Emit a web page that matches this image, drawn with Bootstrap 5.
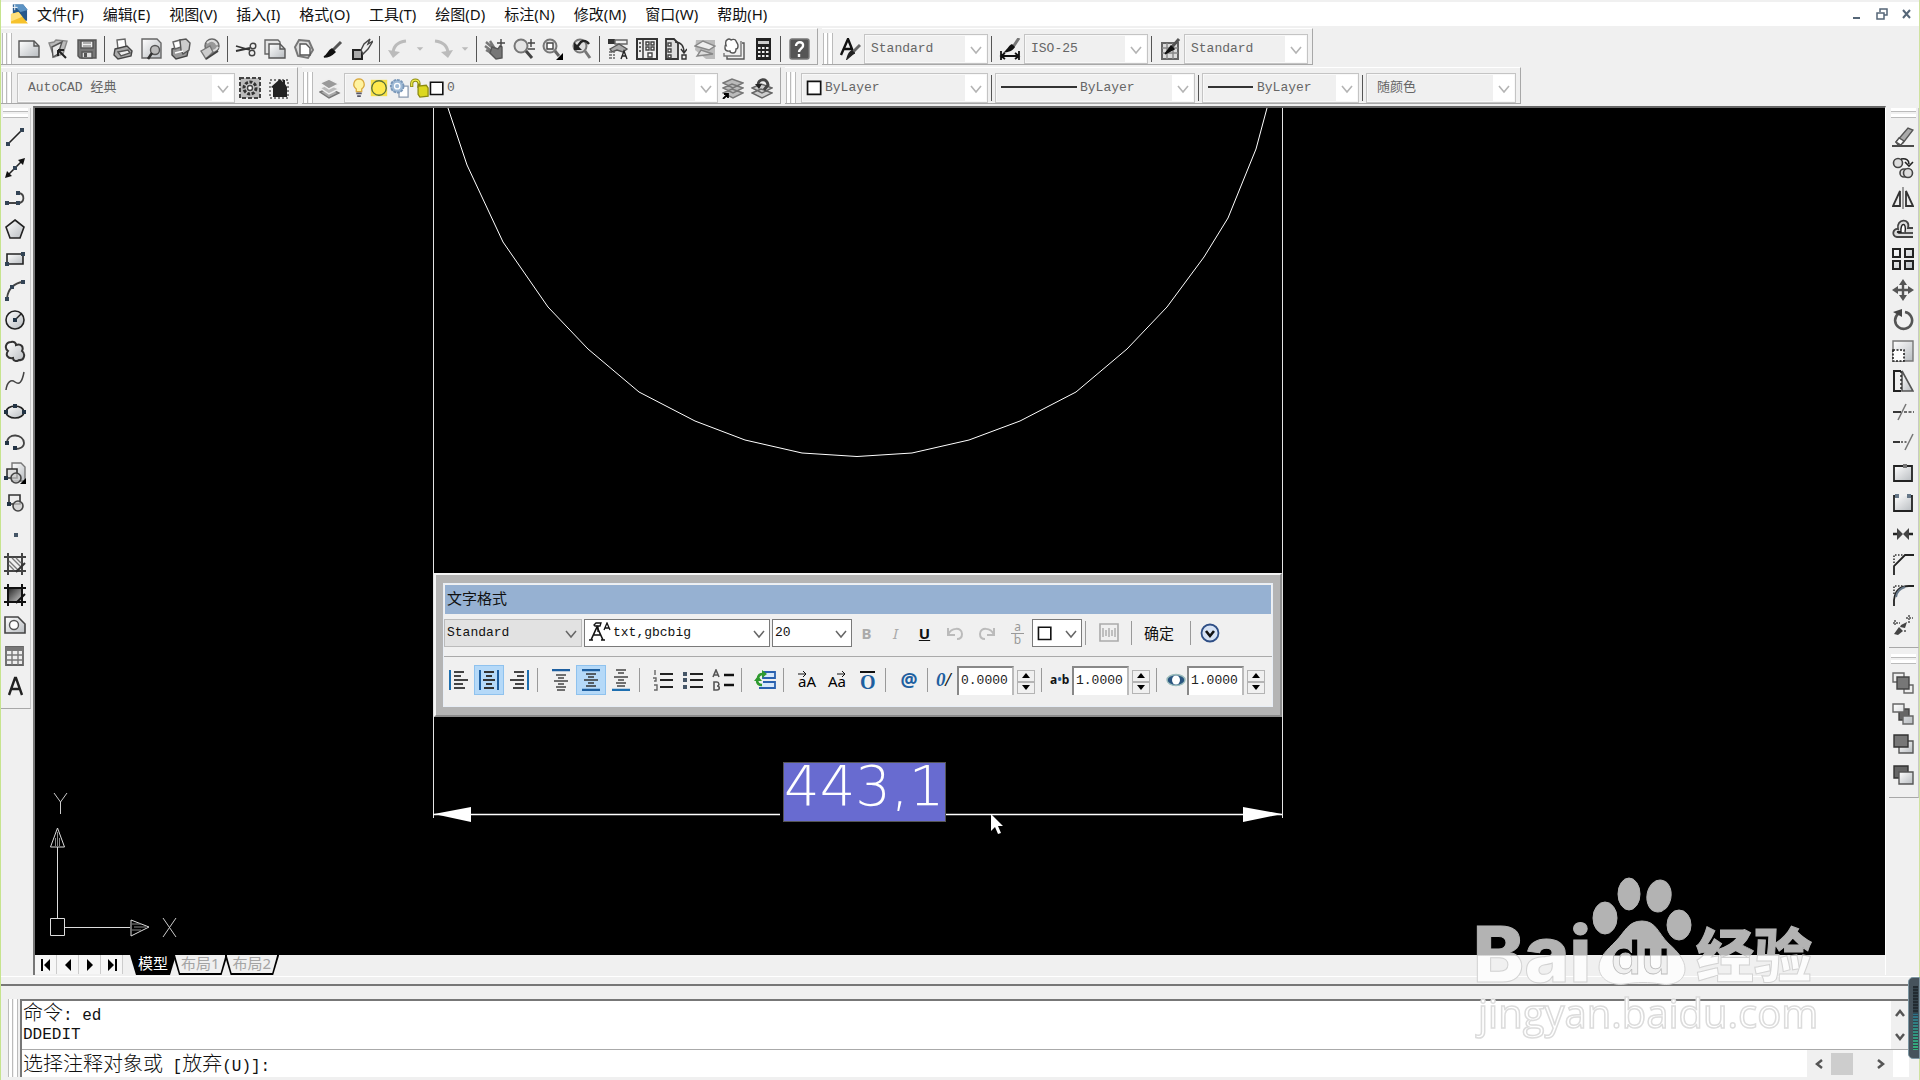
<!DOCTYPE html>
<html lang="zh-CN">
<head>
<meta charset="utf-8">
<meta name="viewport" content="width=device-width, initial-scale=1">
<title>AutoCAD 经典</title>
<link href="https://cdn.jsdelivr.net/npm/bootstrap@5.3.0/dist/css/bootstrap.min.css" rel="stylesheet">
<style>
:root{--face:#f0f0f0;--edge:#a8a8a8;--ui:"Noto Sans","Noto Sans CJK SC",sans-serif;--mono:"Liberation Mono","Noto Sans CJK SC",monospace}
body{background:var(--face);font-family:var(--ui);font-size:15px;line-height:20px;color:#111;border-left:1px solid #c6e48e;border-right:1px solid #cfe3a0}
button,input,select{font-family:inherit;color:inherit;border-radius:0}
svg{display:block;flex:none}
use{fill:none;stroke:#555;stroke-width:1.4px}
.ico{width:22px;height:22px}
/* menu */
.menubar{background:#fff;margin-top:2px;height:24px;padding:0 0 0 9px}
.menubar .nav-link{padding:0 10px 0 9px;color:#111;line-height:24px;white-space:nowrap}
.winbtn{border:0;background:none;padding:0;width:25px;height:24px;display:grid;place-items:center}
/* docked bars */
.barrow{height:37px;margin-top:2px}
.toolbar{border-right:1px solid var(--edge);border-bottom:1px solid var(--edge);border-top:1px solid #fff;padding:4px 4px 0 0;margin-right:4px}
.grip{width:10px;height:31px;margin:0 2px 0 1px;border:solid #bbb;border-width:0 1px;background:linear-gradient(90deg,#fff 0 3px,#bbb 3px 4px,var(--face) 4px 5px,#fff 5px 8px);flex:none}
.grip+.combo{margin-left:3px}
.tb{border:0;background:none;padding:0;width:29px;height:30px;display:grid;place-items:center;flex:none}
.tb.drop{width:16px}
.vsep{width:1px;height:26px;background:#555;margin:0 3px;flex:none}
.combo{border:1px solid #c4c4c4;height:30px;background:var(--face);padding-left:4px;font-size:13px;font-family:var(--mono);color:#666;outline:1px solid #f8f8f8;outline-offset:-2px}
.combo select,.sel{appearance:none;border:0;outline:0;width:100%;min-width:0;height:100%;padding:0 24px 0 2px;color:inherit;font-size:13px;font-family:var(--mono);background:url("data:image/svg+xml,%3Csvg xmlns='http://www.w3.org/2000/svg' width='22' height='26'%3E%3Crect width='22' height='26' fill='white'/%3E%3Cpath d='M6 11l5 6 5-6' fill='none' stroke='%23b4b4b4' stroke-width='1.6'/%3E%3C/svg%3E") right center no-repeat}
.w-style{width:124px}.w-work{width:218px}.w-layer{width:374px}.w-color{width:187px}.w-ltype{width:200px}.w-lweight{width:157px}.w-plot{width:150px}
.combo.tall select{padding-left:6px}
/* side docks */
.dock{width:30px}
.side{border-bottom:1px solid var(--edge);border-right:1px solid #c8c8c8;padding-bottom:7px;width:30px}
.hgrip{height:10px;width:25px;margin:2px 0 4px 2px;border:solid #bbb;border-width:0 0 1px;background:linear-gradient(#fff 0 3px,#bbb 3px 4px,var(--face) 4px 6px,#fff 6px 9px)}
.side .tb{width:27px}
.side .tb:nth-child(odd){height:31px}
.middle{margin-top:2px}
.frame{border-left:2px solid #777;border-top:2px solid #666;border-right:1px solid #fff;margin:0 3px 0 2px}
.stage{background:#000;overflow:hidden}
.plan{width:100%;height:100%;position:absolute;inset:0}
.pointer{position:absolute;left:955px;top:705px}
/* text editor window */
.fmt{position:absolute;left:399px;top:465px;width:848px;background:#b4b4b4;border:solid;border-width:2px;border-color:#f4f4f4 #8c8c8c #8c8c8c #f4f4f4;padding:8px 7px}
.fmtin{background:var(--face);border:1px solid #e8eef6;height:124px}
.fmttitle{background:#96b1d2;height:29px;line-height:27px;font-size:15px;padding-left:2px;margin:1px}
.fmt .sel{border:1px solid #7a7a7a;color:#111;height:28px;background-color:#fff;background-image:url("data:image/svg+xml,%3Csvg xmlns='http://www.w3.org/2000/svg' width='20' height='24'%3E%3Cpath d='M5 10l5 6 5-6' fill='none' stroke='%23666' stroke-width='1.5'/%3E%3C/svg%3E")}
.fmt .sel.gray{background-color:#e2e2e2;border-color:#bbb}
.fmt .pick{display:flex;align-items:center;padding:0;background-image:none}
.fmt .pick .sel{border:0;height:100%}
.w-name{width:138px!important}.w-font{width:186px!important;margin:0 2px}.w-size{width:80px!important}.w-swatch{width:50px!important}
.fmt .vsep{height:24px;background:#999;margin:0 4px 0 3px}
.fmt .tb{font-size:15px}
.fmt .wide{width:32px}
.para .tb{width:30px}
.fmt .para .vsep{margin:0 8px 0 3px}
.fmt .tb.on{background:#b5d9f8;border:1px solid #8fc2ee}
.frac{font-size:12px;line-height:11px;color:#999}
.frac i{display:block;font-style:normal;border-bottom:1px solid #999;padding:0 3px 1px}
.off{color:#aaa}
.blue,.fmt .at{color:#1e5fa0}
.fmt .at{font-size:19px;font-weight:700}
.lab{width:22px;font-weight:700;font-size:12px}
.lab.zero{font:italic 700 19px/20px "Liberation Serif",serif;width:21px}
.num{width:57px;height:29px;border:2px solid #888;border-right-color:#bbb;border-bottom:0;padding:0 0 2px 2px;font:13px var(--mono);background:#fff;color:#222}
.spin{width:18px;margin:3px 3px 0}
.spin button{border:1px solid #b4b4b4;background:var(--face);height:12px;width:18px;padding:0;display:grid;place-items:center}
.mtext{position:absolute;left:749px;top:655px;width:161px;height:58px;border:0;padding:0 0 14px;background:#686bd0;color:#fff;font:200 56px/44px "DejaVu Sans Light",Lato,sans-serif;outline:1px solid #555}
/* layout tabs */
.tabs{height:20px}
.pg{border:0;border-right:1px solid #ccc;background:#f6f6f6;width:22px;height:19px;padding:0;display:grid;place-items:center}
.ltab{position:relative;z-index:0;height:20px;line-height:17px;padding:0 8px;margin-left:-3px;font-size:15px;color:#a4a4a4;text-decoration:none;background:#000;clip-path:polygon(0 0,100% 0,calc(100% - 6px) 100%,6px 100%)}
.ltab::before{content:"";position:absolute;inset:0 2px 2px;z-index:-1;background:var(--face);clip-path:polygon(0 0,100% 0,calc(100% - 5px) 100%,5px 100%)}
.ltab.active{color:#fff;margin-left:7px}
.ltab.active::before{background:#000}
/* command window */
.splitter{border-top:1px solid #fff;border-bottom:2px solid #777;height:10px;margin-top:1px}
.cmd{padding:13px 0 3px;height:94px}
.cmd .grip{height:100%;margin:0 2px 0 7px}
.cmdbox{border-top:2px solid #777;border-left:2px solid #777;background:#fff;margin-right:10px;font-family:var(--mono);font-size:16px}
.cjk{font-size:20px;font-family:"Noto Sans CJK SC",sans-serif;font-weight:300}
.logline{height:23px;line-height:22px;padding-left:1px}
.promptrow{border-top:1px solid #aaa;height:28px;line-height:26px;padding-left:1px}
.promptrow input{border:0;outline:0;background:none}
.sb{background:#f0f0f0}
.sb button{border:0;background:none;padding:0;display:grid;place-items:center}
.thumb{width:22px;height:22px;background:#cdcdcd}
.mark-logo{position:fixed;right:96px;bottom:32px;pointer-events:none}
.meter{position:fixed;right:0;bottom:21px;width:12px;height:82px;border-radius:5px 0 0 5px;background:#46535c;border:1px solid #7d96a2}
.meter::before{content:"";position:absolute;inset:8px 1px 8px 4px;background:repeating-linear-gradient(transparent 0 2px,#33424a 2px 3px),linear-gradient(#222b31 0 42%,#2f6f86 44%,#35b27c)}
</style>
<script src="https://cdn.jsdelivr.net/npm/bootstrap@5.3.0/dist/js/bootstrap.bundle.min.js"></script>
</head>
<body class="d-flex flex-column vh-100 overflow-hidden">
<svg width="0" height="0" class="position-absolute" aria-hidden="true">
<defs>
<linearGradient id="g" x1="0" y1="0" x2="1" y2="1"><stop offset="0" stop-color="#fff"/><stop offset="1" stop-color="#b8bcc0"/></linearGradient>
<linearGradient id="gd" x1="0" y1="0" x2="1" y2="1"><stop offset="0" stop-color="#222"/><stop offset="1" stop-color="#ccc"/></linearGradient>
</defs>
<symbol id="new" viewBox="0 0 22 22"><path d="M1 3h15l5 5v11H1z" fill="url(#g)"/><path d="M16 3v5h5"/></symbol>
<symbol id="open" viewBox="0 0 22 22"><path d="M2 5l5-1 2-2 11 1-4 13-9 3z" fill="#bbb" stroke="#888"/><path d="M5 9l10-5-4 12-5 3z" fill="#e8e8e8"/><path d="M11 12l8 8M11 12v6M11 12h6" stroke="#222" stroke-width="2"/></symbol>
<symbol id="save" viewBox="0 0 22 22"><path d="M2 2h18v18H4l-2-2z" fill="#777"/><path d="M5 3h12v7H5z" fill="#eee"/><path d="M7 5h8M7 8h8" stroke="#999"/><path d="M6 14h10v6H6z" fill="#ddd"/><path d="M8 15h3v4H8z" fill="#555" stroke="none"/></symbol>
<symbol id="print" viewBox="0 0 22 22"><path d="M5 2l8-1 1 8-8 2z" fill="#fff" stroke="#666"/><path d="M3 11l12-3 5 5-1 5-13 3-4-4z" fill="#aaa" stroke="#444"/><path d="M6 14l10-2 2 3-9 3z" fill="#eee"/></symbol>
<symbol id="preview" viewBox="0 0 22 22"><path d="M1 1h15l4 4v15H1z" fill="url(#g)" stroke="#666"/><circle cx="14" cy="12" r="4.500" fill="#bbb"/><path d="M11 15l-4 6" stroke="#333" stroke-width="2.600"/></symbol>
<symbol id="publish" viewBox="0 0 22 22"><path d="M2 11l10-3 6 5-1 5-11 3-4-4z" fill="#999" stroke="#444"/><path d="M3 4l7-2 1 7-6 2z" fill="#fff" stroke="#666"/><path d="M10 2l6-1 4 4-1 7-6 4-2-4z" fill="#ccc"/><path d="M5 15l8-2" stroke="#fff"/></symbol>
<symbol id="plot3d" viewBox="0 0 22 22"><circle cx="13" cy="8" r="7" fill="#999" stroke="#666"/><path d="M8 5c4-4 9-2 10 2M9 11c3 3 8 2 10-2" stroke="#ddd" stroke-width="2"/><path d="M2 13l9-5 3 6-7 7z" fill="#ccc" stroke="#777"/><path d="M7 21l12-8" stroke="#444" stroke-width="2"/></symbol>
<symbol id="cut" viewBox="0 0 22 22"><path d="M1 8l14 4M1 13l14-3" stroke="#333" stroke-width="1.800"/><circle cx="18" cy="8" r="2.800" stroke="#444"/><circle cx="17" cy="15" r="2.800" stroke="#444"/></symbol>
<symbol id="copyc" viewBox="0 0 22 22"><path d="M1 2h13l2 2v12H1z" fill="#e4e4e4" stroke="#666"/><path d="M5 6h11l5 5v9H5z" fill="url(#g)"/><path d="M16 6v5h5"/></symbol>
<symbol id="paste" viewBox="0 0 22 22"><path d="M6 2l10 1 4 9-5 8-10-2-3-9z" fill="#ddd" stroke="#777" stroke-width="2"/><path d="M7 6h6l4 4v7H7z" fill="#fff"/></symbol>
<symbol id="brush" viewBox="0 0 22 22"><path d="M19 4l-9 9" stroke-width="3"/><path d="M10 11l3 3c-3 3-6 5-11 5 4-2 4-6 8-8z" fill="#111" stroke="#111"/></symbol>
<symbol id="match" viewBox="0 0 22 22"><path d="M2 12h9v9H2z" fill="#aaa" stroke="#222" stroke-width="2"/><path d="M10 12l3-6 6-5-2 5 5-3-5 8-5 5z" fill="#eee" stroke="#444"/></symbol>
<symbol id="undo" viewBox="0 0 22 22"><path d="M6 16C6 8 11 4 19 3" stroke="#bbb" stroke-width="3"/><path d="M1 12l5 8 7-6z" fill="#bbb" stroke="none"/></symbol>
<symbol id="redo" viewBox="0 0 22 22"><path d="M16 16C16 8 11 4 3 3" stroke="#bbb" stroke-width="3"/><path d="M21 12l-5 8-7-6z" fill="#bbb" stroke="none"/></symbol>
<symbol id="dd" viewBox="0 0 22 22"><path d="M5 8h12l-6 6z" fill="#bbb" stroke="none"/></symbol>
<symbol id="pan" viewBox="0 0 22 22"><path d="M2 4l8 7M1 8l8 6M2 12l7 4M6 3l5 8" stroke="#777" stroke-width="2.400"/><path d="M8 9l6 2 2-3 2 1v11l-6 1-6-6z" fill="#777"/><path d="M17 1v8M13 5h8" stroke="#444"/></symbol>
<symbol id="zoomrt" viewBox="0 0 22 22"><circle cx="8" cy="8" r="6.500" fill="#e4e4e4" stroke="#777" stroke-width="2"/><path d="M13 13l6 7" stroke="#444" stroke-width="3"/><path d="M15 5h7M18 1v8M15 11h7" stroke="#444"/></symbol>
<symbol id="zoomw" viewBox="0 0 22 22"><circle cx="8" cy="8" r="6.500" fill="#e4e4e4" stroke="#777" stroke-width="2"/><path d="M5 5h6v6H5z" fill="#fff" stroke="#444"/><path d="M13 13l4 5" stroke="#666" stroke-width="3"/><path d="M21 15v7h-7z" fill="#000" stroke="none"/></symbol>
<symbol id="zoomp" viewBox="0 0 22 22"><circle cx="9" cy="8" r="6.500" fill="#ddd" stroke="#777" stroke-width="2"/><path d="M14 13l5 7" stroke="#777" stroke-width="3"/><path d="M6 9l4-5c3-2 6-1 8 2" stroke="#222" stroke-width="2.400"/><path d="M3 4v8h8z" fill="#222" stroke="none"/></symbol>
<symbol id="props" viewBox="0 0 22 22"><path d="M1 1h7v5H1z" fill="#333" stroke="none"/><path d="M8 2h12v4H8z" stroke="#666"/><path d="M3 11l9-5 8 5-4 3-6-2-5 2z" fill="#aaa"/><path d="M2 14h6M2 17h6M2 20h6" stroke="#666" stroke-dasharray="3 1"/><path d="M14 21l3-8 3 8M15 18h4" stroke="#222"/></symbol>
<symbol id="dc" viewBox="0 0 22 22"><path d="M1 1h20v20H1z" fill="#eee" stroke="#333" stroke-width="2"/><path d="M7 1v20" stroke="#333"/><path d="M3 5h2M3 9h2M3 13h2" stroke="#333"/><path d="M10 4h3v3h-3zM15 4h3v3h-3zM10 9h3v3h-3zM15 9h3v3h-3zM12 15h4v4h-4z" stroke="#444" fill="#fff"/></symbol>
<symbol id="tp" viewBox="0 0 22 22"><path d="M1 1h8l4 4v16H1z" fill="#ddd" stroke="#333" stroke-width="1.800"/><path d="M3 5h3v3H3zM3 11h3v3H3zM3 17h3v3H3z" fill="#fff" stroke="#444"/><path d="M10 4c6 0 9 4 9 11M16 11l3 4 3-4M17 17h4v4h-4z" stroke="#333"/></symbol>
<symbol id="ssm" viewBox="0 0 22 22"><path d="M2 2h19v19H12L1 12z" fill="#bbb" stroke="none"/><path d="M1 8l14 4 6-4-12-5z" fill="#eee" stroke="#888"/><path d="M3 18l16-2-12-4z" fill="#ddd" stroke="#888"/></symbol>
<symbol id="markup" viewBox="0 0 22 22"><path d="M4 18v3h17V5h-2"/><path d="M1 15v3h17V3" stroke="#777"/><path d="M4 2c2-2 4 0 4 0s4-2 5 1 2 2 2 5-2 3-2 3 0 4-3 4-3-2-3-2-5 1-5-3 1-3 1-3-1-4 1-5z" fill="#fff"/></symbol>
<symbol id="calc" viewBox="0 0 22 22"><path d="M4 0h15v22H4z" fill="#222" stroke="none"/><path d="M6 3h11v3H6z" fill="#ccc" stroke="none"/><path d="M6 10h12M6 14h12M6 18h12" stroke="#eee" stroke-width="2" stroke-dasharray="2.500 1.500"/></symbol>
<symbol id="help" viewBox="0 0 22 22"><rect x="2" y="1" width="19" height="20" rx="2" fill="#555" stroke="#777"/><path d="M8 8c0-5 8-5 7 0 0 2-4 3-4 6M11 16v3" stroke="#fff" stroke-width="2.400"/></symbol>
<symbol id="tstyle" viewBox="0 0 22 22"><path d="M2 17L9 1l6 15M5 11h8" stroke="#111" stroke-width="2.400"/><path d="M21 7l-8 8" stroke="#666" stroke-width="3"/><path d="M13 13l2 2-7 6c1-3 1-6 5-8z" fill="#222" stroke="#222"/></symbol>
<symbol id="dstyle" viewBox="0 0 22 22"><path d="M20 0l-6 9" stroke="#777" stroke-width="3"/><path d="M13 6l3 3c-2 4-7 5-12 6 4-3 5-7 9-9z" fill="#111" stroke="none"/><path d="M2 13v9M20 13v9M2 18h18M6 15l-4 3 4 3M16 15l4 3-4 3" stroke="#111" stroke-width="1.800"/></symbol>
<symbol id="tbstyle" viewBox="0 0 22 22"><path d="M3 5h16v16H3z" fill="#ddd" stroke="#666" stroke-width="2"/><path d="M3 10h16M3 15h16M8 5v16M14 5v16" stroke="#888"/><path d="M20 1l-7 8" stroke-width="3"/><path d="M12 8l3 3-9 5z" fill="#111" stroke="#111"/></symbol>
<symbol id="gear" viewBox="0 0 22 22"><path d="M1 1h20v20H1z" fill="#bbb" stroke="#444" stroke-dasharray="4 2" stroke-width="2"/><circle cx="11" cy="11" r="6" fill="#ccc" stroke="#333" stroke-width="3" stroke-dasharray="3 1.500"/><circle cx="11" cy="11" r="2.500" fill="#fff" stroke="#444"/></symbol>
<symbol id="myws" viewBox="0 0 22 22"><path d="M2 3h18v18H2z" stroke-dasharray="2 2"/><path d="M3 10l9-8 3 3V3h2v4l2 3v10H5v-9z" fill="#222" stroke="none"/></symbol>
<symbol id="layers" viewBox="0 0 22 22"><path d="M1 15l9-4 10 5-10 5z" fill="#aaa" stroke="#777"/><path d="M1 11l9-4 10 5-10 5z" fill="#bbb" stroke="#eee"/><path d="M1 6l9-4 10 5-10 5z" fill="#999" stroke="#eee"/></symbol>
<symbol id="layercur" viewBox="0 0 22 22"><path d="M1 16l9-4 11 4-10 5zM1 11l9-4 11 4-10 5zM1 6l9-4 11 4-10 5z" fill="#bbb" stroke="#777"/><path d="M1 22l5-5M2 17h4v4" stroke="#000" stroke-width="1.800"/></symbol>
<symbol id="layerprev" viewBox="0 0 22 22"><path d="M1 16l9-4 11 4-10 5zM1 11l9-4 11 4-10 5z" fill="#ccc" stroke="#666"/><path d="M7 8c0-6 9-8 10 0l-4 5" stroke="#444" stroke-width="3"/><path d="M4 7l7 0-3 5z" fill="#222" stroke="none"/></symbol>
<symbol id="bulb" viewBox="0 0 22 22"><path d="M11 1a6 6 0 0 1 3 11v3H8v-3A6 6 0 0 1 11 1z" fill="#fff3a0" stroke="#d8a83c"/><path d="M8 17h6M9 20h4" stroke="#556" stroke-width="2"/></symbol>
<symbol id="sun" viewBox="0 0 22 22"><path d="M2 2h18v18H2z" fill="#f6e04a" stroke="none"/><circle cx="11" cy="11" r="8" fill="#ffe94d" stroke="#587038" stroke-width="1.500"/></symbol>
<symbol id="vpf" viewBox="0 0 22 22"><path d="M11 9h10v12H11z" fill="#fff" stroke="#8a9ab0"/><circle cx="9" cy="9" r="7" fill="#9fbad6" stroke="#7896b8" stroke-width="2" stroke-dasharray="3 1"/><circle cx="9" cy="9" r="3" stroke="#fff"/></symbol>
<symbol id="lock" viewBox="0 0 22 22"><path d="M3 10V6c0-5 8-5 8 0v5" stroke="#8c8a10" stroke-width="3.500"/><path d="M3 9V6c0-5 8-5 8 0" stroke="#f1ee4c"/><path d="M10 9l9-1 2 3v9l-9 1-2-3z" fill="#dcd820" stroke="#8c8a10"/></symbol>
<symbol id="sw" viewBox="0 0 22 22"><path d="M2 3h17v17H2z" fill="#fff" stroke="#111" stroke-width="2.200"/></symbol>
<symbol id="d-line" viewBox="0 0 22 22"><path d="M4 18L18 4" stroke="#222" stroke-width="1.600"/><path d="M2 16h4v4H2zM16 2h4v4h-4z" fill="#345" stroke="none"/></symbol>
<symbol id="d-xline" viewBox="0 0 22 22"><path d="M3 19L19 3" stroke="#222" stroke-width="1.600"/><path d="M1 21l2-7 5 5zM21 1l-7 2 5 5z" fill="#111" stroke="none"/><path d="M9 9h4v4H9z" fill="#345" stroke="none"/></symbol>
<symbol id="d-pline" viewBox="0 0 22 22"><path d="M2 16h12c7 0 7-9 1-10" stroke="#444" stroke-width="1.800"/><path d="M1 14h4v4H1zM12 14h4v4h-4zM12 4h4v4h-4z" fill="#345" stroke="none"/></symbol>
<symbol id="d-poly" viewBox="0 0 22 22"><path d="M11 2l9 7-4 11H6L2 9z" fill="url(#g)" stroke="#222" stroke-width="1.600"/></symbol>
<symbol id="d-rect" viewBox="0 0 22 22"><path d="M3 6h16v10H3z" fill="url(#g)" stroke="#222" stroke-width="1.600"/><path d="M1 14h4v4H1zM17 4h4v4h-4z" fill="#345" stroke="none"/></symbol>
<symbol id="d-arc" viewBox="0 0 22 22"><path d="M3 19C4 10 10 4 19 3" stroke="#444" stroke-width="1.800"/><path d="M1 18h4v4H1zM6 6h4v4H6zM17 1h4v4h-4z" fill="#345" stroke="none"/></symbol>
<symbol id="d-circle" viewBox="0 0 22 22"><circle cx="11" cy="11" r="9" fill="url(#g)" stroke="#222" stroke-width="1.600"/><path d="M11 11l6-6" stroke="#222"/><path d="M9 9h4v4H9z" fill="#234" stroke="none"/></symbol>
<symbol id="d-cloud" viewBox="0 0 22 22"><path d="M7 2c3-1 5 1 5 3 5-2 8 2 6 6 4 3 2 10-3 9-2 2-6 1-6-2-5 1-8-3-5-7-4-3-2-9 3-9z" fill="url(#g)" stroke="#333" stroke-width="2"/></symbol>
<symbol id="d-spline" viewBox="0 0 22 22"><path d="M2 20c1-8 5-11 9-8s7 1 9-10" stroke="#444" stroke-width="1.500"/></symbol>
<symbol id="d-ell" viewBox="0 0 22 22"><ellipse cx="11" cy="11" rx="9" ry="6" fill="url(#g)" stroke="#222" stroke-width="1.600"/><path d="M0 9h4v4H0zM18 9h4v4h-4zM9 3h4v4H9z" fill="#234" stroke="none"/></symbol>
<symbol id="d-ellarc" viewBox="0 0 22 22"><path d="M3 12c0-11 17-9 17 0 0 4-4 6-9 6" stroke="#444" stroke-width="1.800"/><path d="M1 10h4v4H1zM9 15h4v4H9z" fill="#234" stroke="none"/></symbol>
<symbol id="d-ins" viewBox="0 0 22 22"><path d="M8 1h9l4 4v14H8z" fill="url(#g)" stroke="#777"/><path d="M3 7h10v9H3z" fill="#ddd" stroke="#333" stroke-width="1.600"/><circle cx="12" cy="16" r="5" fill="#ccc" fill-opacity=".7" stroke="#444" stroke-width="1.600"/><path d="M22 16v6h-6z" fill="#000" stroke="none"/><path d="M0 14h4v4H0z" fill="#234" stroke="none"/></symbol>
<symbol id="d-blk" viewBox="0 0 22 22"><path d="M5 3h11v9H5z" fill="#eee" stroke="#333" stroke-width="1.600"/><circle cx="14" cy="14" r="5" fill="#ccc" fill-opacity=".7" stroke="#444" stroke-width="1.600"/><path d="M3 10h4v4H3z" fill="#234" stroke="none"/></symbol>
<symbol id="d-pt" viewBox="0 0 22 22"><path d="M10 10h4v4h-4z" fill="#456" stroke="none"/></symbol>
<symbol id="d-hatch" viewBox="0 0 22 22"><path d="M4 0v22M18 0v22M0 4h22M0 18h22" stroke="#444" stroke-width="2"/><path d="M5 8l9 9M5 12l5 5M8 5l9 9M12 5l5 5" stroke="#777"/><path d="M21 10l-9 9" stroke="#333" stroke-width="2"/></symbol>
<symbol id="d-grad" viewBox="0 0 22 22"><path d="M4 4h14v14H4z" fill="url(#gd)" stroke="none"/><path d="M4 0v22M18 0v22M0 4h22M0 18h22" stroke="#111" stroke-width="2"/><path d="M21 10l-9 9" stroke="#111" stroke-width="2"/></symbol>
<symbol id="d-reg" viewBox="0 0 22 22"><path d="M1 3h13l7 7v9H1z" fill="url(#g)" stroke="#444" stroke-width="1.600"/><circle cx="10" cy="11" r="4.500" fill="#fff"/></symbol>
<symbol id="d-tab" viewBox="0 0 22 22"><path d="M2 2h17v18H2z" fill="#eee" stroke="#666" stroke-width="1.800"/><path d="M2 4h17" stroke="#777" stroke-width="4"/><path d="M2 10h17M2 15h17M8 5v15M14 5v15" stroke="#777"/></symbol>
<symbol id="d-text" viewBox="0 0 22 22"><path d="M5 20l6-17h1l6 17M7 14h9" stroke="#222" stroke-width="2.400"/></symbol>
<symbol id="m-erase" viewBox="0 0 22 22"><path d="M0 20h22" stroke="#222" stroke-width="1.600"/><path d="M4 16L16 2l5 2-10 13-5 2z" fill="#aaa"/><path d="M4 16l3-4 5 3-3 4z" fill="#fff"/></symbol>
<symbol id="m-copy" viewBox="0 0 22 22"><circle cx="6" cy="6" r="4.500" fill="#ddd" stroke="#444" stroke-width="1.600"/><circle cx="12" cy="16" r="4" fill="#ddd" stroke="#444" stroke-width="1.600"/><circle cx="16" cy="16" r="4.500" fill="#ddd" stroke="#444" stroke-width="1.600"/><path d="M9 2c5-1 8 1 8 5M13 5l4 4 4-4" stroke="#222" stroke-width="1.600"/></symbol>
<symbol id="m-mirror" viewBox="0 0 22 22"><path d="M11 0v22" stroke="#777"/><path d="M8 4v15H1zM14 4v15h7z" fill="#eee" stroke="#333" stroke-width="1.800"/></symbol>
<symbol id="m-off" viewBox="0 0 22 22"><path d="M21 19H5c-6-1-4-9 1-8C4 0 19 0 16 10h5" fill="#ddd" stroke="#444" stroke-width="1.800"/><path d="M21 15H7c-3-1-1-2 2-1C8 4 15 4 13 14" fill="#fff" stroke="#222"/></symbol>
<symbol id="m-arr" viewBox="0 0 22 22"><path d="M1 1h7v8H1zM13 1h8v8h-8zM1 13h7v8H1zM13 13h8v8h-8z" fill="url(#g)" stroke="#222" stroke-width="2"/></symbol>
<symbol id="m-move" viewBox="0 0 22 22"><path d="M11 3v16M3 11h16" stroke-width="2.400"/><path d="M11 0l4 6H7zM11 22l4-6H7zM0 11l6-4v8zM22 11l-6-4v8z" fill="#555" stroke="none"/></symbol>
<symbol id="m-rot" viewBox="0 0 22 22"><path d="M13 3a8.500 8.500 0 1 1-7 2" stroke-width="2.600"/><path d="M1 3l9-3 0 8z" fill="#444" stroke="none"/></symbol>
<symbol id="m-scale" viewBox="0 0 22 22"><path d="M1 1h20v20H1z" fill="url(#g)" stroke="#777"/><path d="M1 10h11v11H1z" fill="#fff" stroke="#222" stroke-width="1.600" stroke-dasharray="2 1.500"/></symbol>
<symbol id="m-str" viewBox="0 0 22 22"><path d="M10 1l11 20H10z" fill="url(#g)" stroke-width="1.600"/><path d="M9 1H2v20h7" stroke="#222" stroke-width="2"/><path d="M9 1v20" stroke="#222" stroke-dasharray="2 2"/></symbol>
<symbol id="m-trim" viewBox="0 0 22 22"><path d="M1 11h8" stroke="#222" stroke-width="1.800"/><path d="M12 11h10" stroke="#444" stroke-dasharray="3 1.500"/><path d="M6 19l8-16" stroke="#777" stroke-width="1.600"/></symbol>
<symbol id="m-ext" viewBox="0 0 22 22"><path d="M1 11h7" stroke="#222" stroke-width="1.800"/><path d="M9 11h6" stroke="#444" stroke-dasharray="2 1.500"/><path d="M13 19l8-16" stroke="#777" stroke-width="1.600"/></symbol>
<symbol id="m-brk1" viewBox="0 0 22 22"><path d="M2 4h18v15H2z" fill="url(#g)" stroke="#222" stroke-width="1.800"/><path d="M11 2h4v4h-4z" fill="#777" stroke="none"/></symbol>
<symbol id="m-brk" viewBox="0 0 22 22"><path d="M2 4h18v15H2z" fill="url(#g)" stroke="none"/><path d="M5 4H2v15h18V4h-3" stroke="#222" stroke-width="1.800"/><path d="M3 2h4v4H3zM15 2h4v4h-4z" fill="#678" stroke="none"/></symbol>
<symbol id="m-join" viewBox="0 0 22 22"><path d="M1 11h6M15 11h6" stroke="#222" stroke-width="2.400"/><path d="M5 5l6 6-6 6zM17 5l-6 6 6 6z" fill="#444" stroke="none"/></symbol>
<symbol id="m-cham" viewBox="0 0 22 22"><path d="M2 22V13L13 2h9" stroke="#222" stroke-width="1.800"/><path d="M2 10V2h9" stroke="#333" stroke-width="1.600" stroke-dasharray="1.500 1.500"/></symbol>
<symbol id="m-fil" viewBox="0 0 22 22"><path d="M2 22v-6C3 7 8 2 17 2h5" stroke="#222" stroke-width="1.800"/><path d="M4 13c1-6 4-8 9-10" stroke="#678" stroke-width="2"/><path d="M2 10V2h9" stroke="#333" stroke-width="1.600" stroke-dasharray="1.500 1.500"/></symbol>
<symbol id="m-exp" viewBox="0 0 22 22"><path d="M2 20l5-7 4 4-5 4zM9 11l6-3-2 6-5-1z" fill="#444" stroke="none"/><path d="M1 9h7M3 6v5M14 4h7M17 1v8M12 17h3" stroke="#777" stroke-width="2" stroke-dasharray="2 1"/></symbol>
<symbol id="o-f" viewBox="0 0 22 22"><path d="M1 1h11v9H1zM12 13h9v8h-9z" fill="#eee" stroke="#666"/><path d="M5 5h12v12H5z" fill="#777" stroke="#444"/></symbol>
<symbol id="o-b" viewBox="0 0 22 22"><path d="M7 6h10v11H7z" fill="#666" stroke="#444"/><path d="M1 1h11v8H1zM11 13h10v8H11z" fill="url(#g)" stroke="#666"/></symbol>
<symbol id="o-a" viewBox="0 0 22 22"><path d="M7 8h14v12H7z" fill="url(#g)"/><path d="M2 2h14v12H2z" fill="#777" stroke="#333"/></symbol>
<symbol id="o-u" viewBox="0 0 22 22"><path d="M2 2h14v12H2z" fill="#666" stroke="#333"/><path d="M7 8h14v12H7z" fill="url(#g)"/></symbol>
<symbol id="al" viewBox="0 0 22 22"><path d="M2 1v20" stroke="#1e6fb0" stroke-width="2"/><path d="M6 3h10M6 7h7M6 11h14M6 15h9M6 19h11" stroke="#444" stroke-width="2"/></symbol>
<symbol id="ac" viewBox="0 0 22 22"><path d="M2 1v20M20 1v20" stroke="#1e5fa0" stroke-width="2"/><path d="M6 3h10M8 7h6M5 11h12M8 15h6M6 19h10" stroke="#333" stroke-width="2"/></symbol>
<symbol id="ar" viewBox="0 0 22 22"><path d="M20 1v20" stroke="#1e6fb0" stroke-width="2"/><path d="M6 3h10M9 7h7M2 11h14M7 15h9M5 19h11" stroke="#444" stroke-width="2"/></symbol>
<symbol id="vt" viewBox="0 0 22 22"><path d="M2 1h18" stroke="#1e5fa0" stroke-width="2.500"/><path d="M6 6h10M8 9h6M4 12h14M8 15h6M6 18h10M7 21h8" stroke="#444" stroke-width="1.600"/></symbol>
<symbol id="vm" viewBox="0 0 22 22"><path d="M2 1h18M2 21h18" stroke="#1e5fa0" stroke-width="2.500"/><path d="M6 5h10M8 8h6M4 11h14M8 14h6M6 17h10" stroke="#333" stroke-width="1.600"/></symbol>
<symbol id="vb" viewBox="0 0 22 22"><path d="M2 21h18" stroke="#1e6fb0" stroke-width="2.500"/><path d="M6 1h10M8 4h6M4 8h14M8 11h6M6 14h10M7 17h8" stroke="#444" stroke-width="1.600"/></symbol>
<symbol id="ln" viewBox="0 0 22 22"><path d="M8 5h13M8 11h13M8 18h13" stroke="#222" stroke-width="1.800"/><path d="M3 1v5M1 9h3v3H2M2 16h3v5H2" stroke="#666"/></symbol>
<symbol id="lb" viewBox="0 0 22 22"><path d="M8 5h13M8 11h13M8 18h13" stroke="#222" stroke-width="1.800"/><path d="M1 3h4v4H1zM1 9h4v4H1zM1 16h4v4H1z" fill="#456" stroke="none"/></symbol>
<symbol id="la" viewBox="0 0 22 22"><path d="M12 6h10M12 16h10" stroke="#111" stroke-width="2.600"/><path d="M1 8l3-7 3 7M2 6h4M2 13v8h3c3 0 3-4 0-4 3 0 2-4 0-4z" stroke-width="1.600"/></symbol>
<symbol id="fld" viewBox="0 0 22 22"><path d="M9 3h12v6H9zM9 13h12v6H5" fill="#d6e8fb" stroke="#2a62b0" stroke-width="1.800"/><path d="M4 10c0-4 2-5 5-5M8 16c-3 0-5-1-5-5" stroke="#2f9a2f" stroke-width="2.600"/><path d="M8 1l5 4-5 4zM0 12l4-5 4 5z" fill="#2f9a2f" stroke="none"/></symbol>
<symbol id="und" viewBox="0 0 22 22"><path d="M4 6v7h7" stroke="#bbb" stroke-width="2"/><path d="M4 13c3-8 14-8 14-1 0 3-2 5-5 5" stroke="#bbb" stroke-width="2"/></symbol>
<symbol id="red" viewBox="0 0 22 22"><path d="M18 6v7h-7" stroke="#bbb" stroke-width="2"/><path d="M18 13C15 5 4 5 4 12c0 3 2 5 5 5" stroke="#bbb" stroke-width="2"/></symbol>
<symbol id="rul" viewBox="0 0 22 22"><path d="M2 2h18v17H2z" stroke="#aaa" stroke-width="1.600"/><path d="M5 6v9M8 8v6M11 6v9M14 8v6M17 6v9" stroke="#aaa"/></symbol>
<symbol id="opt" viewBox="0 0 22 22"><circle cx="11" cy="11" r="8.500" fill="#d6e2f4" stroke="#2f4f86" stroke-width="1.800"/><path d="M7 9l4 5 4-5" stroke="#111" stroke-width="2.600"/></symbol>
<symbol id="eye" viewBox="0 0 22 22"><ellipse cx="11" cy="11" rx="9" ry="5.500" fill="#2a5580" stroke="#9bb" /><ellipse cx="11" cy="11" rx="4" ry="4.500" fill="#fff" stroke="none"/></symbol>
<symbol id="fontm" viewBox="0 0 22 22"><path d="M2 18l6-13 6 13M4 13h8M0 18h4M12 18h4" stroke="#111" stroke-width="1.600"/><path d="M5 3l2-2h5l-1 3H6zM9 4v6M15 8l3-7 3 7M16 6h4" stroke="#111" stroke-width="1.300"/></symbol>
</svg>

<nav class="menubar d-flex align-items-center" aria-label="菜单栏">
<svg width="18" height="24" viewBox="0 0 19 24" aria-hidden="true"><path d="M3 2h11l4 5v12H3z" fill="#28598c"/><path d="M3 2l8 8 7-2v-1l-4-5z" fill="#5c93c4"/><path d="M1 12l8-2 10 12H1z" fill="#f6c22c"/><path d="M1 12l8-2 4 5-12 5z" fill="#ffe07a"/><path d="M5 2v6M2 5h6" stroke="#fff"/></svg>
<div class="nav flex-nowrap me-auto">
<a class="nav-link" href="#">文件(F)</a><a class="nav-link" href="#">编辑(E)</a><a class="nav-link" href="#">视图(V)</a><a class="nav-link" href="#">插入(I)</a><a class="nav-link" href="#">格式(O)</a><a class="nav-link" href="#">工具(T)</a><a class="nav-link" href="#">绘图(D)</a><a class="nav-link" href="#">标注(N)</a><a class="nav-link" href="#">修改(M)</a><a class="nav-link" href="#">窗口(W)</a><a class="nav-link" href="#">帮助(H)</a>
</div>
<button class="winbtn" aria-label="最小化"><svg width="12" height="12"><path d="M2 10h7" stroke="#567" stroke-width="2"/></svg></button>
<button class="winbtn" aria-label="还原"><svg width="12" height="12" fill="none" stroke="#567" stroke-width="1.500"><path d="M4 4V1h7v6H8M1 5h7v6H1z"/></svg></button>
<button class="winbtn" aria-label="关闭"><svg width="12" height="12"><path d="M2 2l7 8M9 2l-7 8" stroke="#567" stroke-width="2"/></svg></button>
</nav>

<div class="barrow d-flex">
<div class="toolbar d-flex align-items-center" role="toolbar" aria-label="标准">
<span class="grip"></span>
<button class="tb" aria-label="新建"><svg class="ico"><use href="#new"/></svg></button><button class="tb" aria-label="打开"><svg class="ico"><use href="#open"/></svg></button><button class="tb" aria-label="保存"><svg class="ico"><use href="#save"/></svg></button><span class="vsep"></span>
<button class="tb" aria-label="打印"><svg class="ico"><use href="#print"/></svg></button><button class="tb" aria-label="打印预览"><svg class="ico"><use href="#preview"/></svg></button><button class="tb" aria-label="发布"><svg class="ico"><use href="#publish"/></svg></button><button class="tb" aria-label="三维打印"><svg class="ico"><use href="#plot3d"/></svg></button><span class="vsep"></span>
<button class="tb" aria-label="剪切"><svg class="ico"><use href="#cut"/></svg></button><button class="tb" aria-label="复制"><svg class="ico"><use href="#copyc"/></svg></button><button class="tb" aria-label="粘贴"><svg class="ico"><use href="#paste"/></svg></button><button class="tb" aria-label="特性刷"><svg class="ico"><use href="#brush"/></svg></button><button class="tb" aria-label="块编辑器"><svg class="ico"><use href="#match"/></svg></button><span class="vsep"></span>
<button class="tb" aria-label="放弃"><svg class="ico"><use href="#undo"/></svg></button><button class="tb drop" aria-label="放弃列表"><svg width="12" height="12"><use href="#dd"/></svg></button><button class="tb" aria-label="重做"><svg class="ico"><use href="#redo"/></svg></button><button class="tb drop" aria-label="重做列表"><svg width="12" height="12"><use href="#dd"/></svg></button><span class="vsep"></span>
<button class="tb" aria-label="平移"><svg class="ico"><use href="#pan"/></svg></button><button class="tb" aria-label="实时缩放"><svg class="ico"><use href="#zoomrt"/></svg></button><button class="tb" aria-label="窗口缩放"><svg class="ico"><use href="#zoomw"/></svg></button><button class="tb" aria-label="缩放上一个"><svg class="ico"><use href="#zoomp"/></svg></button><span class="vsep"></span>
<button class="tb" aria-label="特性"><svg class="ico"><use href="#props"/></svg></button><button class="tb" aria-label="设计中心"><svg class="ico"><use href="#dc"/></svg></button><button class="tb" aria-label="工具选项板"><svg class="ico"><use href="#tp"/></svg></button><button class="tb" aria-label="图纸集"><svg class="ico"><use href="#ssm"/></svg></button><button class="tb" aria-label="标记集"><svg class="ico"><use href="#markup"/></svg></button><button class="tb" aria-label="计算器"><svg class="ico"><use href="#calc"/></svg></button><span class="vsep"></span>
<button class="tb" aria-label="帮助"><svg class="ico"><use href="#help"/></svg></button>
</div>
<div class="toolbar d-flex align-items-center" role="toolbar" aria-label="样式">
<span class="grip"></span>
<button class="tb" aria-label="文字样式"><svg class="ico"><use href="#tstyle"/></svg></button>
<div class="combo w-style"><select aria-label="文字样式"><option>Standard</option></select></div><span class="vsep"></span>
<button class="tb" aria-label="标注样式"><svg class="ico"><use href="#dstyle"/></svg></button>
<div class="combo w-style"><select aria-label="标注样式"><option>ISO-25</option></select></div><span class="vsep"></span>
<button class="tb" aria-label="表格样式"><svg class="ico"><use href="#tbstyle"/></svg></button>
<div class="combo w-style"><select aria-label="表格样式"><option>Standard</option></select></div>
</div>
</div>

<div class="barrow d-flex">
<div class="toolbar d-flex align-items-center" role="toolbar" aria-label="工作空间">
<span class="grip"></span>
<div class="combo tall w-work"><select aria-label="工作空间"><option>AutoCAD 经典</option></select></div>
<button class="tb" aria-label="工作空间设置"><svg class="ico"><use href="#gear"/></svg></button><button class="tb" aria-label="我的工作空间"><svg class="ico"><use href="#myws"/></svg></button>
</div>
<div class="toolbar d-flex align-items-center" role="toolbar" aria-label="图层">
<span class="grip"></span>
<button class="tb" aria-label="图层特性"><svg class="ico"><use href="#layers"/></svg></button>
<div class="combo w-layer d-flex align-items-center"><svg width="20" height="20"><use href="#bulb"/></svg><svg width="20" height="20"><use href="#sun"/></svg><svg width="20" height="20"><use href="#vpf"/></svg><svg width="20" height="20"><use href="#lock"/></svg><svg width="16" height="16"><use href="#sw"/></svg><select aria-label="图层"><option>0</option></select></div>
<button class="tb" aria-label="置为当前"><svg class="ico"><use href="#layercur"/></svg></button><button class="tb" aria-label="上一个图层"><svg class="ico"><use href="#layerprev"/></svg></button>
</div>
<div class="toolbar d-flex align-items-center" role="toolbar" aria-label="特性">
<span class="grip"></span>
<div class="combo w-color d-flex align-items-center"><svg width="17" height="17"><use href="#sw"/></svg><select aria-label="颜色"><option>ByLayer</option></select></div><span class="vsep"></span>
<div class="combo w-ltype d-flex align-items-center"><svg width="78" height="3"><path d="M1 1h76" stroke="#333" stroke-width="2"/></svg><select aria-label="线型"><option>ByLayer</option></select></div><span class="vsep"></span>
<div class="combo w-lweight d-flex align-items-center"><svg width="48" height="3"><path d="M1 1h45" stroke="#333" stroke-width="2"/></svg><select aria-label="线宽"><option>ByLayer</option></select></div><span class="vsep"></span>
<div class="combo tall w-plot"><select aria-label="打印样式"><option>随颜色</option></select></div>
</div>
</div>

<main class="middle d-flex flex-grow-1">
<aside class="dock">
<div class="side" role="toolbar" aria-label="绘图">
<div class="hgrip"></div>
<button class="tb" aria-label="直线"><svg class="ico"><use href="#d-line"/></svg></button><button class="tb" aria-label="构造线"><svg class="ico"><use href="#d-xline"/></svg></button><button class="tb" aria-label="多段线"><svg class="ico"><use href="#d-pline"/></svg></button><button class="tb" aria-label="正多边形"><svg class="ico"><use href="#d-poly"/></svg></button><button class="tb" aria-label="矩形"><svg class="ico"><use href="#d-rect"/></svg></button><button class="tb" aria-label="圆弧"><svg class="ico"><use href="#d-arc"/></svg></button><button class="tb" aria-label="圆"><svg class="ico"><use href="#d-circle"/></svg></button><button class="tb" aria-label="修订云线"><svg class="ico"><use href="#d-cloud"/></svg></button><button class="tb" aria-label="样条曲线"><svg class="ico"><use href="#d-spline"/></svg></button><button class="tb" aria-label="椭圆"><svg class="ico"><use href="#d-ell"/></svg></button><button class="tb" aria-label="椭圆弧"><svg class="ico"><use href="#d-ellarc"/></svg></button><button class="tb" aria-label="插入块"><svg class="ico"><use href="#d-ins"/></svg></button><button class="tb" aria-label="创建块"><svg class="ico"><use href="#d-blk"/></svg></button><button class="tb" aria-label="点"><svg class="ico"><use href="#d-pt"/></svg></button><button class="tb" aria-label="图案填充"><svg class="ico"><use href="#d-hatch"/></svg></button><button class="tb" aria-label="渐变色"><svg class="ico"><use href="#d-grad"/></svg></button><button class="tb" aria-label="面域"><svg class="ico"><use href="#d-reg"/></svg></button><button class="tb" aria-label="表格"><svg class="ico"><use href="#d-tab"/></svg></button><button class="tb" aria-label="多行文字"><svg class="ico"><use href="#d-text"/></svg></button>
</div>
</aside>
<section class="frame flex-grow-1 d-flex flex-column">
<div class="stage flex-grow-1 position-relative">
<svg class="plan" aria-label="绘图区" fill="none" stroke="#fff" stroke-width="1"><g transform="translate(-35 -108)">
<path d="M433.500 108v710M1282.500 108v710" stroke="#e4e4e4"/>
<path d="M448 108L467 165 503 242 548 307 588 349 639 392 695 421 745 440 802 453 857 456.500 912 453 969 440 1020 421 1076 392 1127 349 1167 307 1204 257 1228 218 1256 149 1267 108"/>
<path d="M433 814.500h347M945 814.500h337" stroke-width="1.500"/>
<path d="M434 814l37-7v15zM1282 814l-39-7v15z" fill="#fff" stroke="none"/>
<path d="M57.500 918v-71M64 927.500h66M50.500 918.500h14v17h-14zM57.500 828l-7 19h14zM149 927l-18-7v16z" stroke="#ddd"/>
<path d="M57.500 832v14M55.500 838v8M59.500 838v8M134 927h12M132 924h9M132 930h9" stroke="#888"/>
<path d="M54 793l6.500 9 6.500-9M60.500 802v12M163 918l13 19M176 918l-13 19" stroke="#ccc"/>
</g></svg>
<input class="mtext" aria-label="标注文字" value="443,1">
<svg class="pointer" width="14" height="22" viewBox="0 0 14 22" aria-hidden="true"><path d="M1 1v17l4-4 3 7 3-1-3-7h5z" fill="#fff"/></svg>

<div class="fmt" role="dialog" aria-label="文字格式">
<div class="fmtin">
<div class="fmttitle">文字格式</div>
<div class="d-flex align-items-center mt-1">
<select class="sel gray w-name" aria-label="样式"><option>Standard</option></select>
<div class="sel pick w-font"><svg width="22" height="22" class="ms-1"><use href="#fontm"/></svg><select class="sel" aria-label="字体"><option>txt,gbcbig</option></select></div>
<select class="sel w-size" aria-label="文字高度"><option>20</option></select>
<button class="tb off" aria-label="粗体"><b>B</b></button><button class="tb off" aria-label="斜体"><i>I</i></button><button class="tb" aria-label="下划线"><b><u>U</u></b></button>
<button class="tb wide" aria-label="放弃"><svg class="ico"><use href="#und"/></svg></button><button class="tb wide" aria-label="重做"><svg class="ico"><use href="#red"/></svg></button>
<button class="tb" aria-label="堆叠"><span class="frac"><i>a</i>b</span></button>
<div class="sel pick w-swatch"><svg width="16" height="16" class="ms-1"><use href="#sw"/></svg><select class="sel px-0" aria-label="颜色"><option></option></select></div>
<span class="vsep"></span><button class="tb w-auto px-2" aria-label="标尺"><svg class="ico"><use href="#rul"/></svg></button><span class="vsep"></span>
<button class="tb w-auto px-2">确定</button><span class="vsep ms-2"></span><button class="tb" aria-label="选项"><svg class="ico"><use href="#opt"/></svg></button>
</div>
<hr class="my-2 opacity-100" style="color:#aaa">
<div class="para d-flex align-items-center">
<button class="tb" aria-label="左对齐"><svg class="ico"><use href="#al"/></svg></button><button class="tb on" aria-label="居中"><svg class="ico"><use href="#ac"/></svg></button><button class="tb" aria-label="右对齐"><svg class="ico"><use href="#ar"/></svg></button><span class="vsep"></span>
<button class="tb" aria-label="上对齐"><svg class="ico"><use href="#vt"/></svg></button><button class="tb on" aria-label="中央对齐"><svg class="ico"><use href="#vm"/></svg></button><button class="tb" aria-label="下对齐"><svg class="ico"><use href="#vb"/></svg></button><span class="vsep"></span>
<button class="tb" aria-label="编号"><svg class="ico"><use href="#ln"/></svg></button><button class="tb" aria-label="项目符号"><svg class="ico"><use href="#lb"/></svg></button><button class="tb" aria-label="大写字母"><svg class="ico"><use href="#la"/></svg></button><span class="vsep"></span>
<button class="tb" aria-label="插入字段"><svg class="ico"><use href="#fld"/></svg></button><span class="vsep"></span>
<button class="tb" aria-label="大写"><svg class="ico" viewBox="0 0 22 22"><text x="2" y="18" font-size="15">aA</text><path d="M2 5h8M7 2l3 3-3 3" fill="none" stroke="#111"/></svg></button><button class="tb" aria-label="小写"><svg class="ico" viewBox="0 0 22 22"><text x="2" y="18" font-size="15">Aa</text><path d="M11 5h8M16 2l3 3-3 3" fill="none" stroke="#111"/></svg></button><button class="tb" aria-label="上划线"><svg class="ico" viewBox="0 0 22 22"><text x="4" y="20" font-size="20" font-weight="700" font-family="Liberation Serif" fill="#1e5fa0">O</text><path d="M4 3h15" stroke="#111" stroke-width="2"/></svg></button><span class="vsep"></span>
<button class="tb at" aria-label="符号">@</button><span class="vsep"></span>
<label class="lab zero" for="ob"><span class="blue">0</span>/</label><input class="num" id="ob" value="0.0000"><div class="spin"><button aria-label="增大"><svg width="8" height="5"><path d="M0 5l4-5 4 5z"/></svg></button><button aria-label="减小"><svg width="8" height="5"><path d="M0 0l4 5 4-5z"/></svg></button></div><span class="vsep"></span>
<label class="lab" for="tr">a<span class="blue">•</span>b</label><input class="num" id="tr" value="1.0000"><div class="spin"><button aria-label="增大"><svg width="8" height="5"><path d="M0 5l4-5 4 5z"/></svg></button><button aria-label="减小"><svg width="8" height="5"><path d="M0 0l4 5 4-5z"/></svg></button></div><span class="vsep"></span>
<label class="lab" for="wf" aria-label="宽度因子"><svg class="ico"><use href="#eye"/></svg></label><input class="num" id="wf" value="1.0000"><div class="spin"><button aria-label="增大"><svg width="8" height="5"><path d="M0 5l4-5 4 5z"/></svg></button><button aria-label="减小"><svg width="8" height="5"><path d="M0 0l4 5 4-5z"/></svg></button></div>
</div>
</div>
</div>
</div>
<div class="tabs d-flex">
<button class="pg" aria-label="第一个"><svg width="12" height="14"><path d="M1 1h2v12H1zM10 1v12L4 7z"/></svg></button><button class="pg" aria-label="上一个"><svg width="12" height="14"><path d="M9 1v12L3 7z"/></svg></button><button class="pg" aria-label="下一个"><svg width="12" height="14"><path d="M3 1v12l6-6z"/></svg></button><button class="pg" aria-label="最后一个"><svg width="12" height="14"><path d="M9 1h2v12H9zM2 1v12l6-6z"/></svg></button>
<a class="ltab active" href="#">模型</a><a class="ltab" href="#">布局1</a><a class="ltab" href="#">布局2</a>
</div>
</section>
<aside class="dock">
<div class="side" role="toolbar" aria-label="修改">
<div class="hgrip"></div>
<button class="tb" aria-label="删除"><svg class="ico"><use href="#m-erase"/></svg></button><button class="tb" aria-label="复制对象"><svg class="ico"><use href="#m-copy"/></svg></button><button class="tb" aria-label="镜像"><svg class="ico"><use href="#m-mirror"/></svg></button><button class="tb" aria-label="偏移"><svg class="ico"><use href="#m-off"/></svg></button><button class="tb" aria-label="阵列"><svg class="ico"><use href="#m-arr"/></svg></button><button class="tb" aria-label="移动"><svg class="ico"><use href="#m-move"/></svg></button><button class="tb" aria-label="旋转"><svg class="ico"><use href="#m-rot"/></svg></button><button class="tb" aria-label="缩放"><svg class="ico"><use href="#m-scale"/></svg></button><button class="tb" aria-label="拉伸"><svg class="ico"><use href="#m-str"/></svg></button><button class="tb" aria-label="修剪"><svg class="ico"><use href="#m-trim"/></svg></button><button class="tb" aria-label="延伸"><svg class="ico"><use href="#m-ext"/></svg></button><button class="tb" aria-label="打断于点"><svg class="ico"><use href="#m-brk1"/></svg></button><button class="tb" aria-label="打断"><svg class="ico"><use href="#m-brk"/></svg></button><button class="tb" aria-label="合并"><svg class="ico"><use href="#m-join"/></svg></button><button class="tb" aria-label="倒角"><svg class="ico"><use href="#m-cham"/></svg></button><button class="tb" aria-label="圆角"><svg class="ico"><use href="#m-fil"/></svg></button><button class="tb" aria-label="分解"><svg class="ico"><use href="#m-exp"/></svg></button>
</div>
<div class="side pt-1" role="toolbar" aria-label="绘图次序">
<div class="hgrip"></div>
<button class="tb" aria-label="前置"><svg class="ico"><use href="#o-f"/></svg></button><button class="tb" aria-label="后置"><svg class="ico"><use href="#o-b"/></svg></button><button class="tb" aria-label="置于对象之上"><svg class="ico"><use href="#o-a"/></svg></button><button class="tb" aria-label="置于对象之下"><svg class="ico"><use href="#o-u"/></svg></button>
</div>
</aside>
</main>
<div class="splitter"></div>
<footer class="cmd d-flex">
<span class="grip"></span>
<div class="cmdbox flex-grow-1 d-flex flex-column">
<div class="d-flex flex-grow-1">
<div class="flex-grow-1"><div class="logline"><span class="cjk">命令</span>: ed</div><div class="logline">DDEDIT</div></div>
<div class="sb d-flex flex-column justify-content-around px-1"><button aria-label="向上"><svg width="10" height="8" fill="none" stroke="#555" stroke-width="2.500"><path d="M1 7l4-5 4 5"/></svg></button><button aria-label="向下"><svg width="10" height="8" fill="none" stroke="#555" stroke-width="2.500"><path d="M1 1l4 5 4-5"/></svg></button></div>
</div>
<div class="promptrow d-flex"><label for="ci"><span class="cjk">选择注释对象或</span> [<span class="cjk">放弃</span>(U)]:</label><input id="ci" class="flex-grow-1">
<div class="sb d-flex align-items-center me-3"><button class="px-2" aria-label="向左"><svg width="8" height="10" fill="none" stroke="#555" stroke-width="2.500"><path d="M7 1L2 5l5 4"/></svg></button><span class="thumb"></span><button class="ms-3 px-2" aria-label="向右"><svg width="8" height="10" fill="none" stroke="#555" stroke-width="2.500"><path d="M1 1l5 4-5 4"/></svg></button></div></div>
</div>
</footer>

<svg class="mark-logo" width="350" height="178" viewBox="1474 870 350 178" aria-label="Baidu经验 jingyan.baidu.com">
<defs><linearGradient id="du" gradientUnits="userSpaceOnUse" x1="0" y1="955" x2="0" y2="956"><stop offset="0" stop-color="#000"/><stop offset="1" stop-color="#f0f0f0"/></linearGradient>
<linearGradient id="wm" gradientUnits="userSpaceOnUse" x1="0" y1="955" x2="0" y2="956"><stop offset="0" stop-color="#b3b3b3"/><stop offset="1" stop-color="#fcfcfc"/></linearGradient>
<linearGradient id="ol" gradientUnits="userSpaceOnUse" x1="0" y1="955" x2="0" y2="956"><stop offset="0" stop-color="#b3b3b3"/><stop offset="1" stop-color="#d2d2d2"/></linearGradient></defs>
<g fill="url(#wm)" stroke="url(#ol)">
<ellipse cx="1605" cy="918" rx="12" ry="16"/><ellipse cx="1629" cy="894" rx="11" ry="16"/><ellipse cx="1659" cy="896" rx="12" ry="16" transform="rotate(10 1659 896)"/><ellipse cx="1679" cy="925" rx="12" ry="15"/>
<path d="M1642 921c14 0 16 12 26 22 10 9 17 17 17 26 0 12-12 17-24 15-12-2-24-2-36 0-14 2-26-5-26-17 0-10 8-17 17-26 9-9 12-20 26-20z"/>
<text x="1473" y="982" font-family="Inter" font-weight="800" font-size="77">Bai</text>
<text x="1696" y="977" font-family="Noto Sans CJK SC" font-weight="900" font-size="58">经验</text>
</g>
<text x="1611" y="974" font-family="Inter" font-weight="600" font-size="48" fill="url(#du)" stroke="#bbb" stroke-width=".8">du</text>
<text x="1478" y="1028" font-family="Open Sans" font-size="40" fill="#fff" stroke="#dcdcdc" stroke-width="1.500">jingyan.baidu.com</text>
</svg>
<div class="meter" aria-hidden="true"></div>
</body>
</html>
